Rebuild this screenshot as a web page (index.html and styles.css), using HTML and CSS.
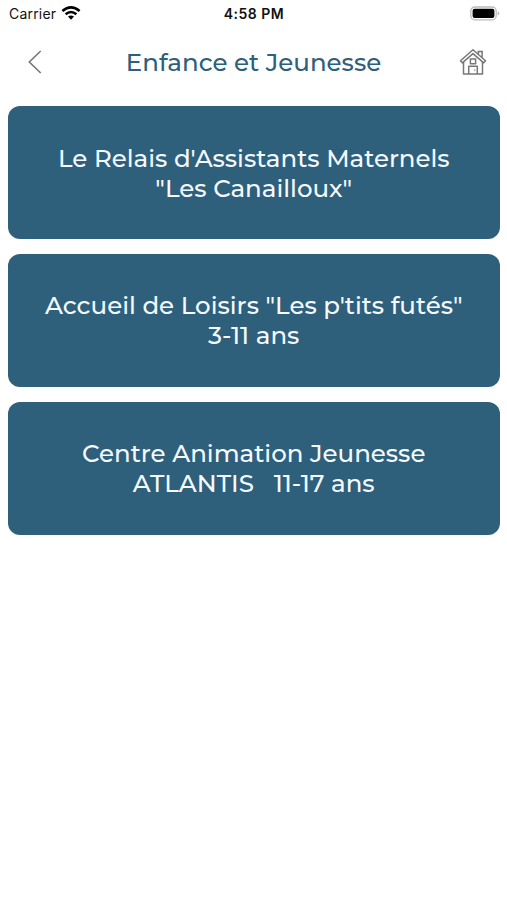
FILE: index.html
```html
<!DOCTYPE html>
<html lang="fr">
<head>
<meta charset="utf-8">
<meta name="viewport" content="width=device-width, initial-scale=1">
<title>Enfance et Jeunesse</title>
<link rel="stylesheet" href="styles.css">
</head>
<body>
<div class="status">
  <div class="carrier"><span>Carrier</span>
    <svg class="wifi" viewBox="0 0 20 14" width="20" height="14" fill="none" stroke="#000" stroke-width="2.6"><path d="M1.4 5.1Q10-2.3 18.6 5.1"/><path d="M4.6 8.3Q10 3.7 15.4 8.3"/><path d="M7 10.6Q10 8.2 13 10.6L10 13.8Z" fill="#000" stroke="none"/></svg>
  </div>
  <time class="clock">4:58 PM</time>
  <svg class="battery" viewBox="0 0 31 15" width="31" height="15"><rect x="1.8" y="1" width="25.4" height="12.8" rx="4" fill="#fff" stroke="#bbb" stroke-width="1.3"/><rect x="3.6" y="2.8" width="21.8" height="9.2" rx="2" fill="#000"/><path d="M28.6 5.2q1.8 .8 1.8 2.2t-1.8 2.2z" fill="#bbb"/></svg>
</div>
<header class="nav">
  <svg class="back" viewBox="0 0 14 24" width="14" height="24" fill="none" stroke="#777" stroke-width="1.6"><path d="M12.7 1L1.3 12l11.4 11"/></svg>
  <h1 class="title">Enfance et Jeunesse</h1>
  <svg class="home" viewBox="0 0 28 28" width="28" height="28" fill="none" stroke="#777" stroke-width="1.5" stroke-linejoin="round"><path d="M1.5 12.7L14 1.8l12.5 10.9-1.8 2.2L14 5.6 3.3 14.9z"/><path d="M4.5 14v12h19V14M19.4 6.2V3.4h3.7v6M18.5 3.4h5.4M9.7 26v-7.7h8.6V26M11.4 11h5.2v4.7h-5.2z"/><path d="M15.8 21.4v1.4" stroke-width="1"/></svg>
</header>
<main class="list">
  <a class="card"><span>Le Relais d'Assistants Maternels</span><span>"Les Canailloux"</span></a>
  <a class="card"><span>Accueil de Loisirs "Les p'tits futés"</span><span>3-11 ans</span></a>
  <a class="card"><span>Centre Animation Jeunesse</span><span>ATLANTIS &nbsp; 11-17 ans</span></a>
</main>
</body>
</html>
```
FILE: styles.css
```css
* { box-sizing: border-box; }
body { margin: 0; background: #fff; font-family: Montserrat, Inter, sans-serif; }
.status { height: 28px; padding: 0 7px 0 9px; display: grid; grid-template-columns: 1fr auto 1fr; align-items: center; color: #111; font: 14px/28px Inter, sans-serif; }
.carrier { display: flex; align-items: center; gap: 5px; letter-spacing: .2px; }
.wifi { margin-top: -2px; }
.clock { font-weight: 600; letter-spacing: .5px; margin-right: 1px; }
.battery { justify-self: end; margin-top: -1px; }
.nav { height: 78px; padding: 0 20px 10px 28px; display: grid; grid-template-columns: 28px 1fr 28px; align-items: center; }
.title { margin: 0 8px 0 0; font-size: 24.5px; font-weight: 500; line-height: 30px; color: #2e5f7b; text-align: center; white-space: nowrap; }
.list { padding: 0 7.5px 0 8px; display: flex; flex-direction: column; gap: 14.8px; }
.card { height: 133px; border-radius: 12px; background: #2e5f7b; color: #f4faff; display: flex; flex-direction: column; align-items: center; justify-content: center; font-size: 24.5px; font-weight: 500; line-height: 30px; white-space: nowrap; }
```
